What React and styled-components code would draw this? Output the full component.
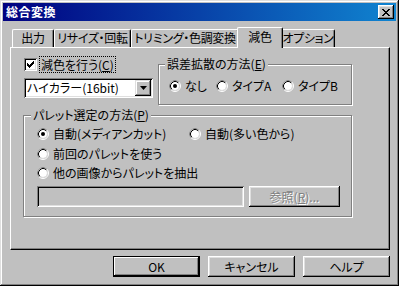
import React from "react";
import styled, { createGlobalStyle } from "styled-components";

const Global = createGlobalStyle`
  body {
    margin: 0;
    background: #c0c0c0;
    font-family: "Noto Sans CJK JP", "Noto Sans", sans-serif;
    font-size: 12px;
    line-height: 14px;
    font-feature-settings: "palt";
    color: #000;
  }
`;

function Radio({ checked }) {
  return (
    <svg width="12" height="12" viewBox="0 0 12 12">
      <circle cx="6" cy="6" r="4" fill="#fff" />
      <circle cx="6" cy="6" r="5.5" fill="none" stroke="#fff" />
      <path d="M2.11 9.89 A5.5 5.5 0 0 1 9.89 2.11" fill="none" stroke="#808080" />
      <circle cx="6" cy="6" r="4.5" fill="none" stroke="#dfdfdf" />
      <path d="M2.82 9.18 A4.5 4.5 0 0 1 9.18 2.82" fill="none" stroke="#000" />
      {checked && <circle cx="6" cy="6" r="2" fill="#000" />}
    </svg>
  );
}

const tabs = [
  { label: "出力", w: 42 },
  { label: "リサイズ・回転", w: 77 },
  { label: "トリミング・色調変換", w: 108 },
  { label: "減色", w: 42, active: true },
  { label: "オプション", w: 54 },
];

export default function App() {
  return (
    <>
      <Global />
      <Window>
        <TitleBar>
          <Title>総合変換</Title>
          <CloseButton>
            <svg width="8" height="7" viewBox="0 0 8 7">
              <path d="M0 0h2v1h1v1h2v-1h1v-1h2v1h-1v1h-1v1h-1v1h1v1h1v1h1v1h-2v-1h-1v-1h-2v1h-1v1h-2v-1h1v-1h1v-1h1v-1h-1v-1h-1v-1h-1z" fill="#000" />
            </svg>
          </CloseButton>
        </TitleBar>

        <Body>
          <TabRow>
            {tabs.map((t) => (
              <Tab key={t.label} $w={t.w} $active={t.active}>
                {t.label}
              </Tab>
            ))}
          </TabRow>

          <Panel>
            <TopRow>
              <LeftCol>
                <CheckRow>
                  <CheckBox>
                    <svg width="7" height="7" viewBox="0 0 7 7">
                      <path d="M0 2h1v1h1v1h1v-1h1v-1h1v-1h1v-1h1v3h-1v1h-1v1h-1v1h-1v1h-1v-1h-1v-1h-1z" fill="#000" />
                    </svg>
                  </CheckBox>
                  <FocusLabel>
                    減色を行う(<u>C</u>)
                  </FocusLabel>
                </CheckRow>
                <Combo>
                  <ComboText>ハイカラー(16bit)</ComboText>
                  <DropButton>
                    <svg width="7" height="4" viewBox="0 0 7 4">
                      <path d="M0 0h7l-3.5 4z" fill="#000" />
                    </svg>
                  </DropButton>
                </Combo>
              </LeftCol>

              <Group $w={194} $h={41} $mt={8} $pt={11} $pl={10}>
                <Legend $left={6}>
                  誤差拡散の方法(<u>E</u>)
                </Legend>
                <RadioRow>
                  <RadioItem $w={47}>
                    <Radio checked />
                    なし
                  </RadioItem>
                  <RadioItem $w={66}>
                    <Radio />
                    タイプA
                  </RadioItem>
                  <RadioItem>
                    <Radio />
                    タイプB
                  </RadioItem>
                </RadioRow>
              </Group>
            </TopRow>

            <Group $w={329} $h={102} $mt={10} $ml={-1} $pt={8} $pl={13}>
              <Legend $left={7}>
                パレット選定の方法(<u>P</u>)
              </Legend>
              <RadioRow $h={20}>
                <RadioItem $w={152}>
                  <Radio checked />
                  自動(メディアンカット)
                </RadioItem>
                <RadioItem>
                  <Radio />
                  自動(多い色から)
                </RadioItem>
              </RadioRow>
              <RadioRow $h={19}>
                <RadioItem>
                  <Radio />
                  前回のパレットを使う
                </RadioItem>
              </RadioRow>
              <RadioRow $h={20}>
                <RadioItem>
                  <Radio />
                  他の画像からパレットを抽出
                </RadioItem>
              </RadioRow>
              <FieldRow>
                <TextField />
                <Button $w={91} disabled>
                  参照(<u>R</u>)...
                </Button>
              </FieldRow>
            </Group>
          </Panel>

          <ButtonRow>
            <Button $w={87} $default>
              OK
            </Button>
            <Button $w={87}>キャンセル</Button>
            <Button $w={87}>ヘルプ</Button>
          </ButtonRow>
        </Body>
      </Window>
    </>
  );
}

const Window = styled.div`
  width: 399px;
  height: 286px;
  box-sizing: border-box;
  padding: 3px;
  background: #c0c0c0;
  box-shadow: inset -1px -1px #000, inset 1px 1px #dfdfdf,
    inset -2px -2px #808080, inset 2px 2px #fff;
`;

const TitleBar = styled.div`
  height: 18px;
  display: flex;
  align-items: center;
  justify-content: space-between;
  padding: 0 2px 0 3px;
  background: linear-gradient(to right, #000080, #1084d0);
`;

const Title = styled.span`
  color: #fff;
  font-weight: bold;
  font-size: 12px;
  letter-spacing: 0.5px;
`;

const CloseButton = styled.div`
  width: 16px;
  height: 14px;
  box-sizing: border-box;
  display: flex;
  align-items: center;
  justify-content: center;
  background: #c0c0c0;
  box-shadow: inset -1px -1px #000, inset 1px 1px #fff,
    inset -2px -2px #808080, inset 2px 2px #dfdfdf;
`;

const Body = styled.div`
  padding: 6px 0 0 7px;
`;

const TabRow = styled.div`
  height: 20px;
  display: flex;
  align-items: flex-end;
  padding-left: 2px;
`;

const Tab = styled.div`
  position: relative;
  z-index: ${({ $active }) => ($active ? 1 : 0)};
  width: ${({ $w, $active }) => ($active ? $w + 4 : $w)}px;
  height: ${({ $active }) => ($active ? 21 : 18)}px;
  margin: 0 ${({ $active }) => ($active ? -2 : 0)}px
    ${({ $active }) => ($active ? -1 : 0)}px;
  box-sizing: border-box;
  border-top: 1px solid #fff;
  border-left: 1px solid #fff;
  border-right: 1px solid #000;
  border-radius: 2px 2px 0 0;
  box-shadow: inset -1px 0 #808080;
  background: #c0c0c0;
  display: flex;
  justify-content: center;
  white-space: nowrap;
  letter-spacing: -0.3px;
  padding-top: ${({ $active }) => ($active ? 2 : 1)}px;
`;

const Panel = styled.div`
  width: 380px;
  height: 203px;
  box-sizing: border-box;
  border-top: 1px solid #fff;
  border-left: 1px solid #fff;
  border-right: 1px solid #000;
  border-bottom: 1px solid #000;
  box-shadow: inset -1px -1px #808080;
  padding: 8px 0 0 13px;
`;

const TopRow = styled.div`
  display: flex;
  align-items: flex-start;
`;

const LeftCol = styled.div`
  width: 134px;
  display: flex;
  flex-direction: column;
  gap: 6px;
`;

const CheckRow = styled.div`
  height: 16px;
  display: flex;
  align-items: center;
  gap: 3px;
`;

const CheckBox = styled.div`
  width: 13px;
  height: 13px;
  box-sizing: border-box;
  display: flex;
  align-items: center;
  justify-content: center;
  background: #fff;
  box-shadow: inset 1px 1px #808080, inset -1px -1px #fff,
    inset 2px 2px #000, inset -2px -2px #dfdfdf;
`;

const FocusLabel = styled.span`
  outline: 1px dotted #000;
  outline-offset: 0;
  padding: 0 1px;
  line-height: 15px;
`;

const Combo = styled.div`
  width: 129px;
  height: 20px;
  box-sizing: border-box;
  padding: 2px;
  display: flex;
  align-items: center;
  background: #fff;
  box-shadow: inset 1px 1px #808080, inset -1px -1px #fff,
    inset 2px 2px #000, inset -2px -2px #dfdfdf;
`;

const ComboText = styled.span`
  flex: 1;
  padding-left: 1px;
  white-space: nowrap;
`;

const DropButton = styled.div`
  width: 16px;
  height: 16px;
  box-sizing: border-box;
  display: flex;
  align-items: center;
  justify-content: center;
  background: #c0c0c0;
  box-shadow: inset -1px -1px #000, inset 1px 1px #dfdfdf,
    inset -2px -2px #808080, inset 2px 2px #fff;
`;

const Group = styled.div`
  position: relative;
  width: ${({ $w }) => $w}px;
  height: ${({ $h }) => $h}px;
  margin-top: ${({ $mt }) => $mt || 0}px;
  margin-left: ${({ $ml }) => $ml || 0}px;
  box-sizing: border-box;
  border: 1px solid #808080;
  box-shadow: inset 1px 1px #fff, 1px 1px #fff;
  padding: ${({ $pt }) => $pt}px 0 0 ${({ $pl }) => $pl}px;
`;

const Legend = styled.span`
  position: absolute;
  top: -8px;
  left: ${({ $left }) => $left}px;
  padding: 0 2px;
  background: #c0c0c0;
  white-space: nowrap;
`;

const RadioRow = styled.div`
  height: ${({ $h }) => $h || 20}px;
  display: flex;
  align-items: center;
`;

const RadioItem = styled.div`
  width: ${({ $w }) => ($w ? `${$w}px` : "auto")};
  display: flex;
  align-items: center;
  gap: 4px;
  white-space: nowrap;
  svg {
    flex: none;
  }
`;

const FieldRow = styled.div`
  margin-top: 3px;
  display: flex;
  gap: 5px;
`;

const TextField = styled.div`
  width: 207px;
  height: 21px;
  box-sizing: border-box;
  background: #c0c0c0;
  box-shadow: inset 1px 1px #808080, inset -1px -1px #fff,
    inset 2px 2px #000, inset -2px -2px #dfdfdf;
`;

const ButtonRow = styled.div`
  width: 380px;
  margin-top: 6px;
  display: flex;
  justify-content: flex-end;
  gap: 8px;
`;

const Button = styled.button`
  width: ${({ $w }) => $w}px;
  height: 21px;
  box-sizing: border-box;
  padding: 0;
  border: none;
  background: #c0c0c0;
  font-family: inherit;
  font-size: 12px;
  line-height: 14px;
  font-feature-settings: "palt";
  color: ${({ disabled }) => (disabled ? "#808080" : "#000")};
  text-shadow: ${({ disabled }) => (disabled ? "1px 1px #fff" : "none")};
  box-shadow: ${({ $default }) =>
    $default
      ? "inset 0 0 0 1px #000, inset -2px -2px #000, inset 2px 2px #fff, inset -3px -3px #808080"
      : "inset -1px -1px #000, inset 1px 1px #fff, inset -2px -2px #808080, inset 2px 2px #dfdfdf"};
`;
